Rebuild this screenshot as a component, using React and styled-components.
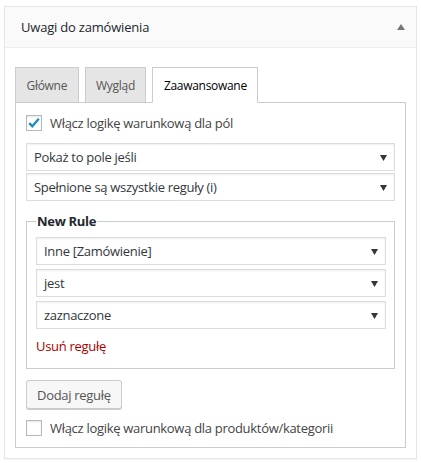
import { styled, createGlobalStyle } from "styled-components";

const GlobalStyle = createGlobalStyle`
  html, body {
    margin: 0;
    padding: 0;
    background: #fff;
  }
  body {
    font-family: "Open Sans", "Noto Sans", "Liberation Sans", sans-serif;
    color: #444;
    letter-spacing: -0.3px;
  }
`;

const ArrowDown = () => (
  <svg width="7" height="7" viewBox="0 0 7 7">
    <path d="M0 1 L7 1 L3.5 7 Z" fill="#32373c" />
  </svg>
);

const Select = ({ children }) => (
  <SelectBox>
    <SelectText>{children}</SelectText>
    <ArrowDown />
  </SelectBox>
);

const Checkbox = ({ checked }) => (
  <CheckBoxSquare>
    {checked && (
      <svg width="16" height="16" viewBox="0 0 16 16">
        <path
          d="M3.2 8.2 L6.3 11.2 L12.8 3.8"
          fill="none"
          stroke="#1e8cbe"
          strokeWidth="2.4"
        />
      </svg>
    )}
  </CheckBoxSquare>
);

const App = () => {
  return (
    <Page>
      <GlobalStyle />
      <Postbox>
        <Header>
          <Title>Uwagi do zamówienia</Title>
          <svg width="8" height="6" viewBox="0 0 8 6">
            <path d="M0 6 L4 0 L8 6 Z" fill="#72777c" />
          </svg>
        </Header>

        <Inside>
          <Tabs>
            <Tab>Główne</Tab>
            <Tab>Wygląd</Tab>
            <Tab $active>Zaawansowane</Tab>
          </Tabs>

          <Panel>
            <CheckRow>
              <Checkbox checked />
              <CheckLabel>Włącz logikę warunkową dla pól</CheckLabel>
            </CheckRow>

            <SelectStack>
              <Select>Pokaż to pole jeśli</Select>
              <Select>Spełnione są wszystkie reguły (i)</Select>
            </SelectStack>

            <RuleSet>
              <Legend>New Rule</Legend>
              <RuleStack>
                <Select>Inne [Zamówienie]</Select>
                <Select>jest</Select>
                <Select>zaznaczone</Select>
              </RuleStack>
              <RemoveLink>Usuń regułę</RemoveLink>
            </RuleSet>

            <Button>Dodaj regułę</Button>

            <CheckRow>
              <Checkbox />
              <CheckLabel>Włącz logikę warunkową dla produktów/kategorii</CheckLabel>
            </CheckRow>
          </Panel>
        </Inside>
      </Postbox>
    </Page>
  );
};

const Page = styled.div`
  padding: 6px 4px;
`;

const Postbox = styled.div`
  width: 413px;
  box-sizing: border-box;
  border: 1px solid #e5e5e5;
  background: #fff;
  box-shadow: 0 1px 1px rgba(0, 0, 0, 0.04);
`;

const Header = styled.div`
  height: 40px;
  background: #fafafa;
  border-bottom: 1px solid #eee;
  display: flex;
  align-items: center;
  justify-content: space-between;
  padding: 0 11px 0 16px;
`;

const Title = styled.h2`
  margin: 0;
  font-size: 13px;
  font-weight: 400;
  letter-spacing: -0.2px;
  color: #23282d;
`;

const Inside = styled.div`
  padding: 19px 10px 10px 10px;
`;

const Tabs = styled.div`
  display: flex;
  gap: 6px;
  margin-bottom: -1px;
  position: relative;
  z-index: 1;
`;

const Tab = styled.div`
  height: 36px;
  padding: 0 10.5px;
  box-sizing: border-box;
  display: flex;
  align-items: center;
  border: 1px solid #ccc;
  border-bottom: 1px solid ${(p) => (p.$active ? "#fff" : "#ccc")};
  background: ${(p) => (p.$active ? "#fff" : "#e5e5e5")};
  color: ${(p) => (p.$active ? "#000" : "#555")};
  font-size: 12px;
  letter-spacing: -0.3px;
`;

const Panel = styled.div`
  border: 1px solid #ccc;
  padding: 12px 10px 11px 10px;
  display: flex;
  flex-direction: column;
  align-items: flex-start;
`;

const CheckRow = styled.label`
  display: flex;
  align-items: center;
  gap: 8px;
  height: 16px;
`;

const CheckBoxSquare = styled.span`
  width: 16px;
  height: 16px;
  box-sizing: border-box;
  border: 1px solid #b4b9be;
  background: #fff;
  box-shadow: inset 0 1px 2px rgba(0, 0, 0, 0.1);
  display: flex;
  align-items: center;
  justify-content: center;
  svg {
    margin: -1px;
  }
`;

const CheckLabel = styled.span`
  font-size: 13px;
  color: #444;
`;

const SelectStack = styled.div`
  align-self: stretch;
  display: flex;
  flex-direction: column;
  gap: 2px;
  margin: 12px 0 0 0;
`;

const SelectBox = styled.div`
  height: 28px;
  box-sizing: border-box;
  border: 1px solid #ddd;
  box-shadow: inset 0 1px 2px rgba(0, 0, 0, 0.07);
  background: #fff;
  display: flex;
  align-items: center;
  justify-content: space-between;
  padding: 0 7px 0 7px;
  color: #32373c;
  font-size: 13px;
`;

const SelectText = styled.span`
  white-space: nowrap;
`;

const RuleSet = styled.fieldset`
  align-self: stretch;
  margin: 11px 0 0 0;
  border: 1px solid #ccc;
  padding: 7px 8px 12px 9px;
  min-width: 0;
`;

const Legend = styled.legend`
  font-size: 13px;
  font-weight: 700;
  color: #23282d;
  padding: 0 1px;
`;

const RuleStack = styled.div`
  display: flex;
  flex-direction: column;
  gap: 4px;
`;

const RemoveLink = styled.a`
  display: block;
  margin-top: 7px;
  line-height: 20px;
  font-size: 13px;
  color: #a00;
  cursor: pointer;
`;

const Button = styled.button`
  margin-top: 11px;
  margin-bottom: 11px;
  height: 29px;
  padding: 0 10px;
  border: 1px solid #ccc;
  border-radius: 3px;
  background: #f7f7f7;
  box-shadow: 0 1px 0 #ccc;
  color: #555;
  font-family: inherit;
  font-size: 13px;
  letter-spacing: -0.3px;
`;

export default App;
